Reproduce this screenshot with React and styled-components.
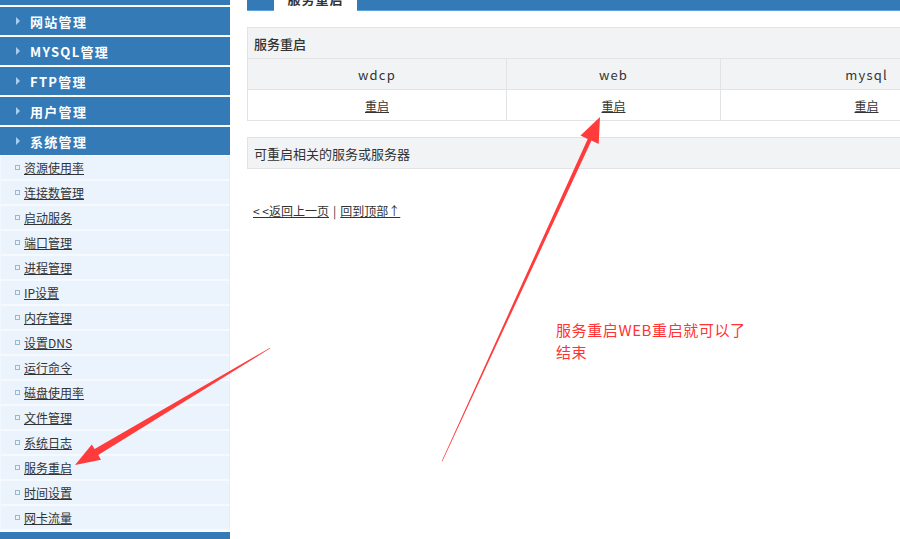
import React from "react";
import styled, { createGlobalStyle } from "styled-components";

const Global = createGlobalStyle`
  html, body { margin: 0; padding: 0; background: #fff; }
  body {
    width: 900px; height: 539px; overflow: hidden; position: relative;
    font-family: "Noto Sans", "Noto Sans CJK SC", sans-serif;
    color: #333;
  }
`;

const Page = styled.div`
  display: flex;
  align-items: flex-start;
  gap: 17px;
  width: 1100px;
  height: 539px;
`;

const Sidebar = styled.nav`
  flex: 0 0 230px;
  display: flex;
  flex-direction: column;
  gap: 2px;
  margin-top: -23px;
`;

const MenuHead = styled.div`
  height: 28px;
  background: #337ab7;
  display: flex;
  align-items: center;
  padding-left: 16px;
  gap: 10px;
  color: #fff;
  font-family: "Noto Sans CJK SC", sans-serif;
  font-weight: 700;
  font-size: 13px;
  letter-spacing: 1.3px;
`;

const Tri = styled.span`
  width: 0; height: 0;
  border-top: 4px solid transparent;
  border-bottom: 4px solid transparent;
  border-left: 4px solid #a9cdee;
`;

const SubList = styled.div`
  display: flex;
  flex-direction: column;
  margin-top: -1px;
`;

const SubItem = styled.div`
  height: 23px;
  background: #ebf4fd;
  border-bottom: 2px solid #f6faff;
  border-left: 1px solid #f3f8fe;
  border-right: 1px solid #e3eefa;
  display: flex;
  align-items: center;
  padding-left: 14px;
  gap: 4px;
  font-family: "Noto Sans CJK SC", sans-serif;
  font-size: 12px;
`;

const Bullet = styled.span`
  width: 3px; height: 3px;
  border: 1px solid #9cb6cf;
`;

const SubLink = styled.a`
  color: #333;
  text-decoration: underline;
`;

const BottomBar = styled.div`
  height: 12px;
  background: #337ab7;
  margin-top: -1px;
`;

const Main = styled.main`
  flex: 0 0 780px;
  display: flex;
  flex-direction: column;
`;

const TopBar = styled.div`
  height: 10px;
  background: #337ab7;
  border-bottom: 1px solid #5aa6dd;
  display: flex;
  padding-left: 27px;
`;

const Tab = styled.div`
  width: 83px;
  height: 11px;
  background: #fff;
  display: flex;
  justify-content: center;
  align-items: flex-end;
  font-family: "Noto Sans CJK SC", sans-serif;
  font-weight: 700;
  font-size: 13px;
  letter-spacing: 1px;
  line-height: 13px;
  color: #333;
  & > span { margin-bottom: 6px; }
`;

const Panel = styled.section`
  width: 764px;
  margin-top: 16px;
  border: 1px solid #e2e3e5;
  font-family: "Noto Sans CJK SC", sans-serif;
  font-size: 13px;
`;

const PanelTitle = styled.div`
  height: 30px;
  background: #f2f3f5;
  display: flex;
  align-items: center;
  padding-left: 6px;
  font-weight: ${p => (p.$bold ? 500 : 400)};
  color: #333;
  border-bottom: ${p => (p.$divided ? "1px solid #e2e3e5" : "none")};
`;

const Row = styled.div`
  display: grid;
  grid-template-columns: 259px 214px 1fr;
  height: 30px;
  background: ${p => p.$bg};
  border-bottom: ${p => (p.$last ? "none" : "1px solid #e2e3e5")};
`;

const Cell = styled.div`
  display: flex;
  align-items: center;
  justify-content: center;
  border-right: 1px solid #e2e3e5;
  font-size: ${p => (p.$latin ? "13px" : "12px")};
  letter-spacing: ${p => (p.$latin ? "1.2px" : "0")};
  color: #333;
  &:last-child { border-right: none; }
`;

const Links = styled.div`
  margin-top: 33px;
  padding-left: 6px;
  font-family: "Noto Sans CJK SC", sans-serif;
  font-size: 12px;
  color: #333;
  display: flex;
  gap: 4px;
`;

const Note = styled.div`
  position: absolute;
  left: 556px;
  top: 319px;
  width: 215px;
  color: #ff3333;
  font-family: "Noto Sans CJK SC", sans-serif;
  font-size: 15px;
  letter-spacing: 0.6px;
  line-height: 22px;
`;

const Overlay = styled.svg`
  position: absolute;
  left: 0; top: 0;
  width: 900px; height: 539px;
  pointer-events: none;
`;

const headers = ["网站管理", "MYSQL管理", "FTP管理", "用户管理", "系统管理"];
const subs = [
  "资源使用率", "连接数管理", "启动服务", "端口管理", "进程管理", "IP设置",
  "内存管理", "设置DNS", "运行命令", "磁盘使用率", "文件管理", "系统日志",
  "服务重启", "时间设置", "网卡流量",
];

export default function App() {
  return (
    <>
      <Global />
      <Page>
        <Sidebar>
          <MenuHead />
          {headers.map(h => (
            <MenuHead key={h}><Tri />{h}</MenuHead>
          ))}
          <SubList>
            {subs.map(s => (
              <SubItem key={s}><Bullet /><SubLink>{s}</SubLink></SubItem>
            ))}
          </SubList>
          <BottomBar />
        </Sidebar>
        <Main>
          <TopBar><Tab><span>服务重启</span></Tab></TopBar>
          <Panel>
            <PanelTitle $bold $divided>服务重启</PanelTitle>
            <Row $bg="#f2f3f5">
              <Cell $latin>wdcp</Cell>
              <Cell $latin>web</Cell>
              <Cell $latin>mysql</Cell>
            </Row>
            <Row $bg="#fff" $last>
              <Cell><SubLink>重启</SubLink></Cell>
              <Cell><SubLink>重启</SubLink></Cell>
              <Cell><SubLink>重启</SubLink></Cell>
            </Row>
          </Panel>
          <Panel>
            <PanelTitle>可重启相关的服务或服务器</PanelTitle>
          </Panel>
          <Links>
            <SubLink>&lt; &lt;返回上一页</SubLink>|<SubLink>回到顶部↑</SubLink>
          </Links>
        </Main>
      </Page>
      <Note>服务重启WEB重启就可以了<br />结束</Note>
      <Overlay viewBox="0 0 900 539">
        <polygon fill="#ff3b3b" points="441.8,461 442.4,461.2 591.5,140.6 598.7,143.9 600,117 580.5,135.5 587.7,138.9" />
        <polygon fill="#ff3b3b" points="270,347.7 270.3,348.3 98.2,455.1 101,459.8 75,465 91.8,444.4 94.6,449.1" />
      </Overlay>
    </>
  );
}
